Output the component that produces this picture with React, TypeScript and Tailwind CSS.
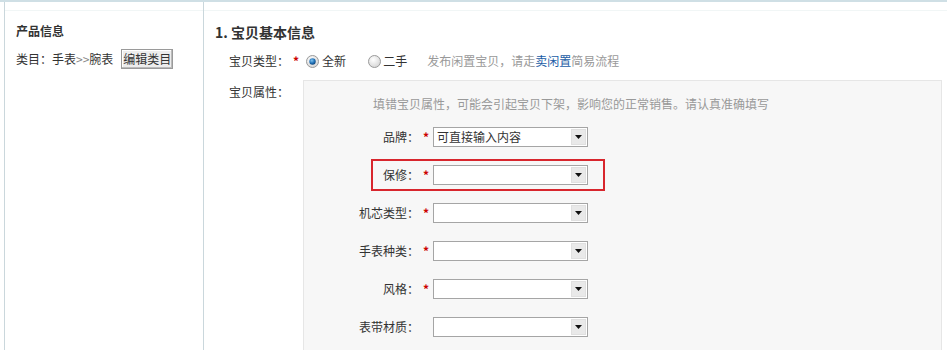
import React from "react";

const font = { fontFamily: '"Noto Sans CJK SC", "Noto Sans", sans-serif' };

function Radio({ checked }: { checked?: boolean }) {
  return (
    <svg width="13" height="13" viewBox="0 0 13 13" className="shrink-0">
      <defs>
        <radialGradient id={checked ? "rg1" : "rg2"} cx="0.4" cy="0.35" r="0.7">
          <stop offset="0" stopColor="#ffffff" />
          <stop offset="1" stopColor="#d4d4d4" />
        </radialGradient>
        <radialGradient id="dot" cx="0.4" cy="0.35" r="0.7">
          <stop offset="0" stopColor="#7fc3f0" />
          <stop offset="0.6" stopColor="#1f6fb5" />
          <stop offset="1" stopColor="#0d3f73" />
        </radialGradient>
      </defs>
      <circle cx="6.5" cy="6.5" r="6" fill={checked ? "url(#rg1)" : "url(#rg2)"} stroke="#9a9a9a" />
      {checked && <circle cx="6.5" cy="6.5" r="3.2" fill="url(#dot)" />}
    </svg>
  );
}

function Select({ value }: { value?: string }) {
  return (
    <div className="flex h-[20px] w-[155px] items-stretch border border-[#a5a5a5] bg-white">
      <div className="flex-1 pl-[3px] text-[12px] leading-[18px] text-[#333]">{value}</div>
      <div className="m-px flex w-[15px] items-center justify-center border border-[#e0e0e0] bg-[#e9e9e9]">
        <svg width="7" height="4" viewBox="0 0 7 4">
          <path d="M0 0h7L3.5 4z" fill="#111" />
        </svg>
      </div>
    </div>
  );
}

function Row({
  label,
  required,
  value,
  highlight,
}: {
  label: string;
  required?: boolean;
  value?: string;
  highlight?: boolean;
}) {
  return (
    <div
      className={
        "ml-[67px] flex h-[32px] w-[234px] items-center border-2 " +
        (highlight ? "border-[#d8262d]" : "border-transparent")
      }
    >
      <div className="flex w-[46px] shrink-0 justify-end whitespace-nowrap text-[#333]">{label}</div>
      <div className="w-[14px] shrink-0 text-center font-bold text-[#c00]">{required ? "*" : ""}</div>
      <Select value={value} />
    </div>
  );
}

export default function App() {
  return (
    <div
      className="flex h-[350px] w-[947px] overflow-hidden border-t-2 border-[#cfdfe5] bg-white text-[12px] leading-[20px] text-[#333]"
      style={font}
    >
      <aside className="ml-[4px] w-[200px] shrink-0 border-x border-[#cad7dc]">
        <div className="h-[9px] border-b border-[#f1f6f6]" />
        <div className="pl-[11px]">
          <div className="mt-[10px] font-bold">产品信息</div>
          <div className="mt-[8px] flex items-center">
            <span>类目：手表</span>
            <span className="text-[#888]">&gt;&gt;</span>
            <span>腕表</span>
            <span className="ml-[8px] border border-[#9a9a9a] bg-[#ededed] px-[1px] leading-[18px] shadow-[inset_-1px_-1px_0_#bbb,inset_1px_1px_0_#fff]">
              编辑类目
            </span>
          </div>
        </div>
      </aside>
      <main className="flex-1">
        <div className="h-[9px] border-b border-[#f1f6f6]" />
        <div className="pl-[11px]">
          <div className="mt-[11px] text-[14px] font-bold leading-[20px]">1. 宝贝基本信息</div>
          <div className="mt-[9px] flex items-center pl-[14px]">
            <span>宝贝类型：</span>
            <span className="ml-[4px] font-bold text-[#c00]">*</span>
            <span className="ml-[7px] flex items-center">
              <Radio checked />
            </span>
            <span className="ml-[3px]">全新</span>
            <span className="ml-[22px] flex items-center">
              <Radio />
            </span>
            <span className="ml-[2px]">二手</span>
            <span className="ml-[20px] text-[#999]">
              发布闲置宝贝，请走<span className="text-[#1c5da6]">卖闲置</span>简易流程
            </span>
          </div>
          <div className="mt-[9px] flex pl-[14px]">
            <div className="w-[74px] shrink-0 pt-[2px]">宝贝属性：</div>
            <div className="mr-[5px] h-[300px] flex-1 border border-[#e6e6e6] bg-[#f7f7f7] pt-[13px]">
              <div className="pl-[69px] text-[#999]">
                填错宝贝属性，可能会引起宝贝下架，影响您的正常销售。请认真准确填写
              </div>
              <div className="mt-[7px] flex flex-col gap-[6px]">
                <Row label="品牌：" required value="可直接输入内容" />
                <Row label="保修：" required highlight />
                <Row label="机芯类型：" required />
                <Row label="手表种类：" required />
                <Row label="风格：" required />
                <Row label="表带材质：" />
              </div>
            </div>
          </div>
        </div>
      </main>
    </div>
  );
}
